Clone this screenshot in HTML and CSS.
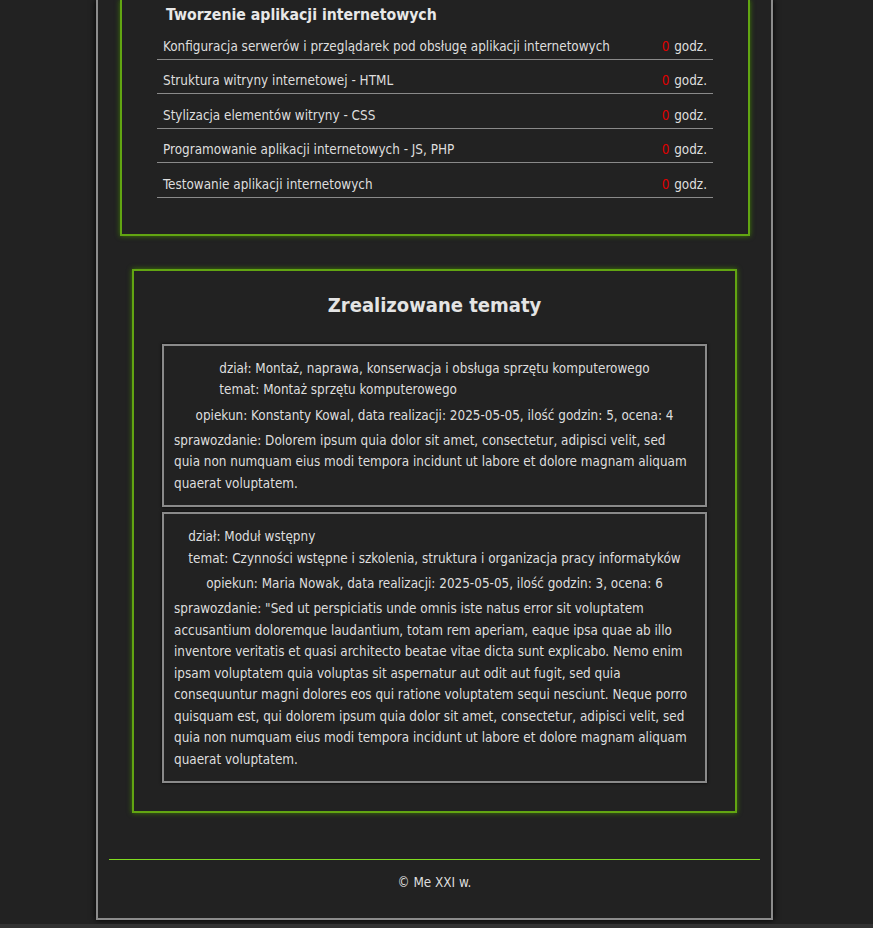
FILE: index.html
```html
<!DOCTYPE html>
<html lang="pl">
<head>
<meta charset="utf-8">
<title>Dziennik praktyk</title>
<link rel="stylesheet" href="styles.css">
</head>
<body>
<div class="page">
  <section class="panel panel-plan">
    <div class="plan">
      <h3 class="plan-title">Tworzenie aplikacji internetowych</h3>
      <div class="row"><span>Konfiguracja serwerów i przeglądarek pod obsługę aplikacji internetowych</span><span><span class="hours">0</span> godz.</span></div>
      <div class="row"><span>Struktura witryny internetowej - HTML</span><span><span class="hours">0</span> godz.</span></div>
      <div class="row"><span>Stylizacja elementów witryny - CSS</span><span><span class="hours">0</span> godz.</span></div>
      <div class="row"><span>Programowanie aplikacji internetowych - JS, PHP</span><span><span class="hours">0</span> godz.</span></div>
      <div class="row"><span>Testowanie aplikacji internetowych</span><span><span class="hours">0</span> godz.</span></div>
    </div>
  </section>

  <section class="panel panel-done">
    <h2 class="done-title">Zrealizowane tematy</h2>
    <article class="card">
      <div class="topic">
        <div>dział: Montaż, naprawa, konserwacja i obsługa sprzętu komputerowego</div>
        <div>temat: Montaż sprzętu komputerowego</div>
      </div>
      <p class="meta">opiekun: Konstanty Kowal, data realizacji: 2025-05-05, ilość godzin: 5, ocena: 4</p>
      <p class="report">sprawozdanie: Dolorem ipsum quia dolor sit amet, consectetur, adipisci velit, sed quia non numquam eius modi tempora incidunt ut labore et dolore magnam aliquam quaerat voluptatem.</p>
    </article>
    <article class="card">
      <div class="topic">
        <div>dział: Moduł wstępny</div>
        <div>temat: Czynności wstępne i szkolenia, struktura i organizacja pracy informatyków</div>
      </div>
      <p class="meta">opiekun: Maria Nowak, data realizacji: 2025-05-05, ilość godzin: 3, ocena: 6</p>
      <p class="report">sprawozdanie: "Sed ut perspiciatis unde omnis iste natus error sit voluptatem accusantium doloremque laudantium, totam rem aperiam, eaque ipsa quae ab illo inventore veritatis et quasi architecto beatae vitae dicta sunt explicabo. Nemo enim ipsam voluptatem quia voluptas sit aspernatur aut odit aut fugit, sed quia consequuntur magni dolores eos qui ratione voluptatem sequi nesciunt. Neque porro quisquam est, qui dolorem ipsum quia dolor sit amet, consectetur, adipisci velit, sed quia non numquam eius modi tempora incidunt ut labore et dolore magnam aliquam quaerat voluptatem.</p>
    </article>
  </section>

  <footer class="footer">© Me XXI w.</footer>
</div>
</body>
</html>
```

FILE: styles.css
```css
html {
  background: #323232;
}
body {
  margin: 0;
  padding-bottom: 4px;
  background: #222222;
  color: #dedede;
  font-family: "DejaVu Sans Condensed", "DejaVu Sans", sans-serif;
  font-size: 13.4px;
}
.page {
  width: 673px;
  margin-left: 96px;
  border: 2px solid #8c8c8c;
  border-top: 0;
  box-shadow: 0 0 6px #000;
  padding-bottom: 26px;
}
.panel {
  border: 2px solid #62a512;
  box-shadow: 0 0 5px #3f7a06;
}
.panel-plan {
  width: 626px;
  margin-left: 22px;
  border-top: 0;
  padding: 5px 0 36px;
}
.plan {
  margin: 0 35px;
}
.plan-title {
  margin: 0;
  padding-left: 9px;
  font-size: 15.7px;
  line-height: 20px;
  font-weight: bold;
  color: #e8e8e8;
}
.row {
  display: flex;
  justify-content: space-between;
  padding: 13.5px 6px 4px;
  line-height: 16px;
  border-bottom: 1px solid #8a8a8a;
}
.hours {
  color: #e00000;
  margin-right: 1px;
}
.panel-done {
  width: 545px;
  margin: 33px auto 0;
  padding: 22px 28px 28px;
}
.done-title {
  margin: 0 0 27px;
  text-align: center;
  font-size: 20px;
  line-height: 24px;
  font-weight: bold;
  color: #e4e4e4;
}
.card {
  border: 2px solid #8a8a8a;
  box-shadow: 0 0 3px #000;
  padding: 12px 10px 11px;
  line-height: 21.5px;
}
.card + .card {
  margin-top: 5px;
}
.topic {
  width: fit-content;
  margin: 0 auto 4px;
}
.meta {
  margin: 0 0 3.5px;
  text-align: center;
}
.report {
  margin: 0;
}
.footer {
  margin: 46px 11px 0;
  border-top: 1px solid #80dc20;
  padding-top: 14px;
  text-align: center;
  line-height: 18px;
}
```
